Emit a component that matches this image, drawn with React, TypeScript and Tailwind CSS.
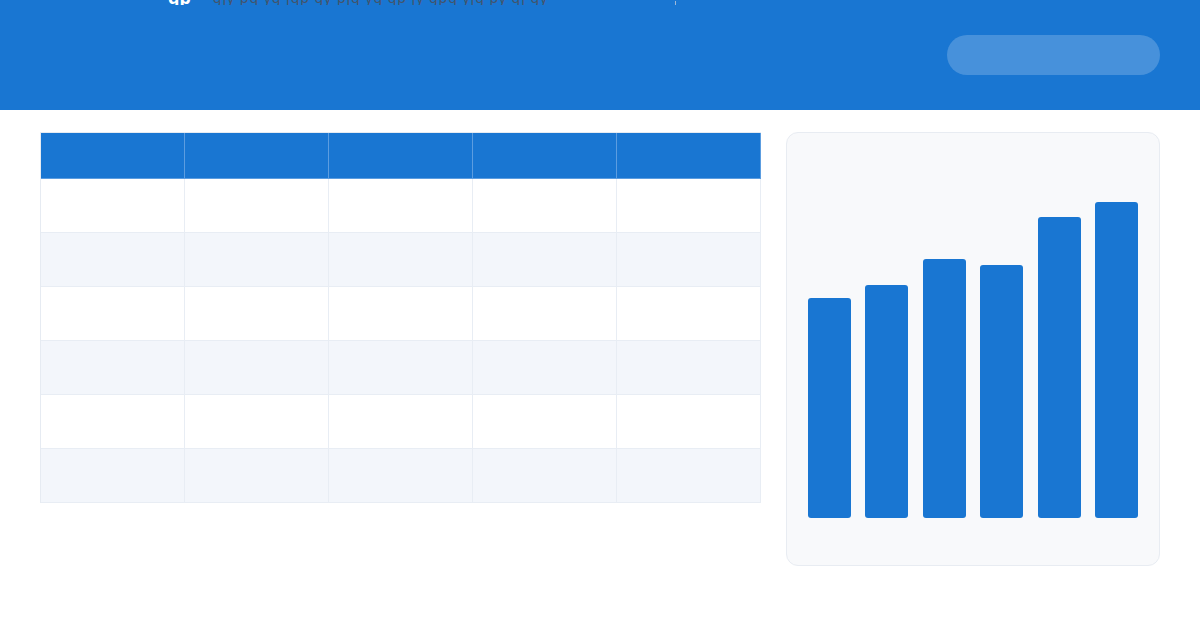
import React from 'react';

const bars = [220, 233, 259, 253, 301, 316];
const rows = [0, 1, 2, 3, 4, 5];
const cols = [0, 1, 2, 3, 4];

function TopStrip() {
  // title line sits mostly above the fold, only its descenders peek through
  return (
    <div className="flex items-end h-[5px] overflow-hidden">
      <div className="flex items-end h-[20px] pl-[168px] leading-none translate-y-[2px]" style={{ fontFamily: '"Noto Sans", "Noto Sans CJK SC", sans-serif' }}>
        <span className="text-[18px] font-bold text-white translate-y-[-1px]">qp</span>
        <span className="ml-[22px] text-[14px] text-[#44546a] tracking-[1px] translate-y-[-2px]">gjy pq yg jqp gy pjq yg qp jy gpq yjg py qj gy</span>
        <span className="ml-[127px] w-px h-[6px] bg-[#9fb8d8]" />
      </div>
    </div>
  );
}

function DataTable() {
  return (
    <div className="border-l border-t border-[#e6ebf2]">
      <div className="grid grid-cols-[repeat(5,144px)] bg-[#1976d2]">
        {cols.map((c) => (
          <div key={c} className="h-[46px] border-r border-b border-[#5c9de0]" />
        ))}
      </div>
      {rows.map((r) => (
        <div key={r} className={`grid grid-cols-[repeat(5,144px)] ${r % 2 === 1 ? 'bg-[#f3f6fb]' : 'bg-white'}`}>
          {cols.map((c) => (
            <div key={c} className="h-[54px] border-r border-b border-[#e8edf4]" />
          ))}
        </div>
      ))}
    </div>
  );
}

function BarChart() {
  return (
    <div className="w-[374px] h-[434px] rounded-xl border border-[#e8ecf2] bg-[#f8f9fb] px-[21px] pt-[22px] pb-[47px] flex items-end">
      <div className="flex items-end justify-between w-full">
        {bars.map((h, i) => (
          <div key={i} className="w-[43px] rounded-[3px] bg-[#1976d2]" style={{ height: h }} />
        ))}
      </div>
    </div>
  );
}

export default function App() {
  return (
    <div className="w-[1200px] h-[630px] bg-white overflow-hidden" style={{ fontFamily: '"Noto Sans", sans-serif' }}>
      <header className="h-[110px] bg-[#1976d2] flex flex-col">
        <TopStrip />
        <div className="flex justify-end pr-[40px] pt-[30px]">
          <button className="w-[213px] h-[40px] rounded-full bg-white/20" />
        </div>
      </header>
      <main className="flex items-start gap-[25px] px-[40px] pt-[22px]">
        <DataTable />
        <BarChart />
      </main>
    </div>
  );
}
